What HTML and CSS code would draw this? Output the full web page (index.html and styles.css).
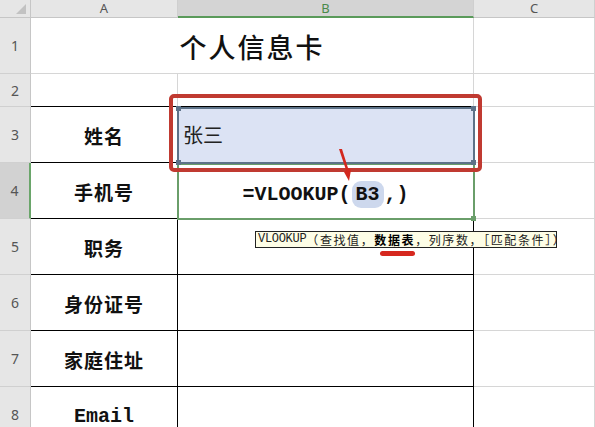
FILE: index.html
```html
<!DOCTYPE html>
<html lang="zh-CN">
<head>
<meta charset="utf-8">
<title>个人信息卡</title>
<link rel="stylesheet" href="styles.css">
</head>
<body>
<div class="sheet">
  <div class="corner"><span class="tri"></span></div>
  <div class="colhdr">A</div>
  <div class="colhdr sel">B</div>
  <div class="colhdr">C</div>

  <div class="rowhdr">1</div>
  <div class="cell title span2">个人信息卡</div>
  <div class="cell"></div>

  <div class="rowhdr">2</div>
  <div class="cell tb"></div>
  <div class="cell tb"></div>
  <div class="cell"></div>

  <div class="rowhdr">3</div>
  <div class="cell t label">姓名</div>
  <div class="cell t name">张三</div>
  <div class="cell"></div>

  <div class="rowhdr sel">4</div>
  <div class="cell t label">手机号</div>
  <div class="cell t formula">=VLOOKUP(<span class="ref">B3</span>,)</div>
  <div class="cell"></div>

  <div class="rowhdr">5</div>
  <div class="cell t label">职务</div>
  <div class="cell t"></div>
  <div class="cell"></div>

  <div class="rowhdr">6</div>
  <div class="cell t label">身份证号</div>
  <div class="cell t"></div>
  <div class="cell"></div>

  <div class="rowhdr">7</div>
  <div class="cell t label">家庭住址</div>
  <div class="cell t"></div>
  <div class="cell"></div>

  <div class="rowhdr">8</div>
  <div class="cell t label mono">Email</div>
  <div class="cell t"></div>
  <div class="cell"></div>

  <div class="active"><span class="h hbr g"></span></div>
  <div class="b3sel"><span class="h htl"></span><span class="h htr"></span><span class="h hbl"></span><span class="h hbr"></span></div>
  <div class="redbox"></div>
  <svg class="arrow" width="20" height="40" viewBox="0 0 20 40"><polygon points="0,0 3,0 9,19 12,21 10,32 5,23 7,21" fill="#d3281e"/></svg>
  <div class="tip"><span class="asc">VLOOKUP </span><span class="cjk">（查找值，<b>数据表</b>，列序数，［匹配条件］）</span></div>
  <div class="underline"></div>
</div>
</body>
</html>
```

FILE: styles.css
```css
html, body {
  margin: 0;
  padding: 0;
  background: #ffffff;
  overflow: hidden;
}

.sheet {
  position: relative;
  width: 595px;
  height: 427px;
  overflow: hidden;
  display: grid;
  grid-template-columns: 31px 147px 296px 121px;
  grid-template-rows: 18px 56px 33px 56px 56px 56px 56px 56px 56px;
  font-family: "Noto Sans CJK SC", sans-serif;
  color: #111;
}

.corner {
  position: relative;
  background: #e6e6e6;
  border-right: 1px solid #c6c6c6;
  border-bottom: 1px solid #c6c6c6;
}
.tri {
  position: absolute;
  right: 4px;
  bottom: 3px;
  width: 10px;
  height: 10px;
  background: #c2c2c2;
  clip-path: polygon(100% 0, 100% 100%, 0 100%);
}

.colhdr {
  background: #e6e6e6;
  border-right: 1px solid #cfcfcf;
  border-bottom: 1px solid #c6c6c6;
  font-family: "Noto Sans", sans-serif;
  font-size: 13px;
  line-height: 17px;
  color: #555;
  text-align: center;
}
.colhdr.sel {
  background: #d4d4d4;
  color: #4a8a4a;
  border-bottom: 2px solid #5a9a5a;
  line-height: 16px;
}

.rowhdr {
  background: #e6e6e6;
  border-right: 1px solid #c6c6c6;
  border-bottom: 1px solid #d0d0d0;
  font-family: "Noto Sans", sans-serif;
  font-size: 14px;
  color: #555;
  display: flex;
  align-items: center;
  justify-content: center;
}
.rowhdr.sel {
  background: #d2d2d2;
  border-right: 2px solid #6aa56a;
}

.cell {
  border-right: 1px solid #d6d6d6;
  border-bottom: 1px solid #d6d6d6;
  display: flex;
  align-items: center;
  justify-content: center;
}
.cell.tb { border-bottom-color: #000; }
.cell.t { border-right-color: #000; border-bottom-color: #000; }
.span2 { grid-column: span 2; }

.title {
  font-size: 27px;
  font-weight: 500;
  letter-spacing: 2px;
  color: #111;
  padding-top: 2px;
}

.label {
  font-size: 19px;
  font-weight: 700;
  letter-spacing: 1px;
  padding-top: 2px;
}
.label.mono {
  font-family: "Liberation Mono", monospace;
  font-size: 20px;
  letter-spacing: 0;
  padding-top: 4px;
}

.name {
  background: #dce3f4;
  justify-content: flex-start;
  padding-left: 5px;
  font-size: 20px;
  font-weight: 400;
  color: #222;
}

.formula {
  font-family: "Liberation Mono", monospace;
  font-size: 20px;
  font-weight: 700;
  color: #111;
  padding-top: 8px;
}
.ref {
  background: #cdd8ed;
  border-radius: 9px;
  padding: 2px 4px;
  margin: 0 1px;
}

.active {
  position: absolute;
  left: 177px;
  top: 163px;
  width: 298px;
  height: 57px;
  box-sizing: border-box;
  border: 2px solid #6a9e6a;
}
.b3sel {
  position: absolute;
  left: 177px;
  top: 107px;
  width: 298px;
  height: 57px;
  box-sizing: border-box;
  border: 2px solid #5d7288;
}
.h {
  position: absolute;
  width: 5px;
  height: 5px;
  background: #5d7288;
}
.h.g { background: #6a9e6a; }
.htl { left: -3px; top: -3px; }
.htr { right: -3px; top: -3px; }
.hbl { left: -3px; bottom: -3px; }
.hbr { right: -3px; bottom: -3px; }

.redbox {
  position: absolute;
  left: 169px;
  top: 94px;
  width: 313px;
  height: 78px;
  box-sizing: border-box;
  border: 4px solid #c03a31;
  border-radius: 5px;
}

.arrow {
  position: absolute;
  left: 339px;
  top: 149px;
}

.tip {
  position: absolute;
  left: 255px;
  top: 231px;
  width: 302px;
  height: 17px;
  box-sizing: border-box;
  border: 1px solid #222;
  background: #fdfde6;
  padding: 0 0 0 2px;
  font-family: "Noto Sans CJK SC", sans-serif;
  font-size: 12px;
  line-height: 15px;
  color: #222;
  white-space: nowrap;
  display: flex;
}
.tip .asc {
  font-family: "Liberation Mono", monospace;
  font-size: 12px;
  letter-spacing: -0.3px;
}
.tip .cjk {
  letter-spacing: 1.6px;
}
.tip b { font-weight: 700; color: #000; }

.underline {
  position: absolute;
  left: 380px;
  top: 251px;
  width: 35px;
  height: 5px;
  border-radius: 3px;
  background: #d6281f;
}
```
